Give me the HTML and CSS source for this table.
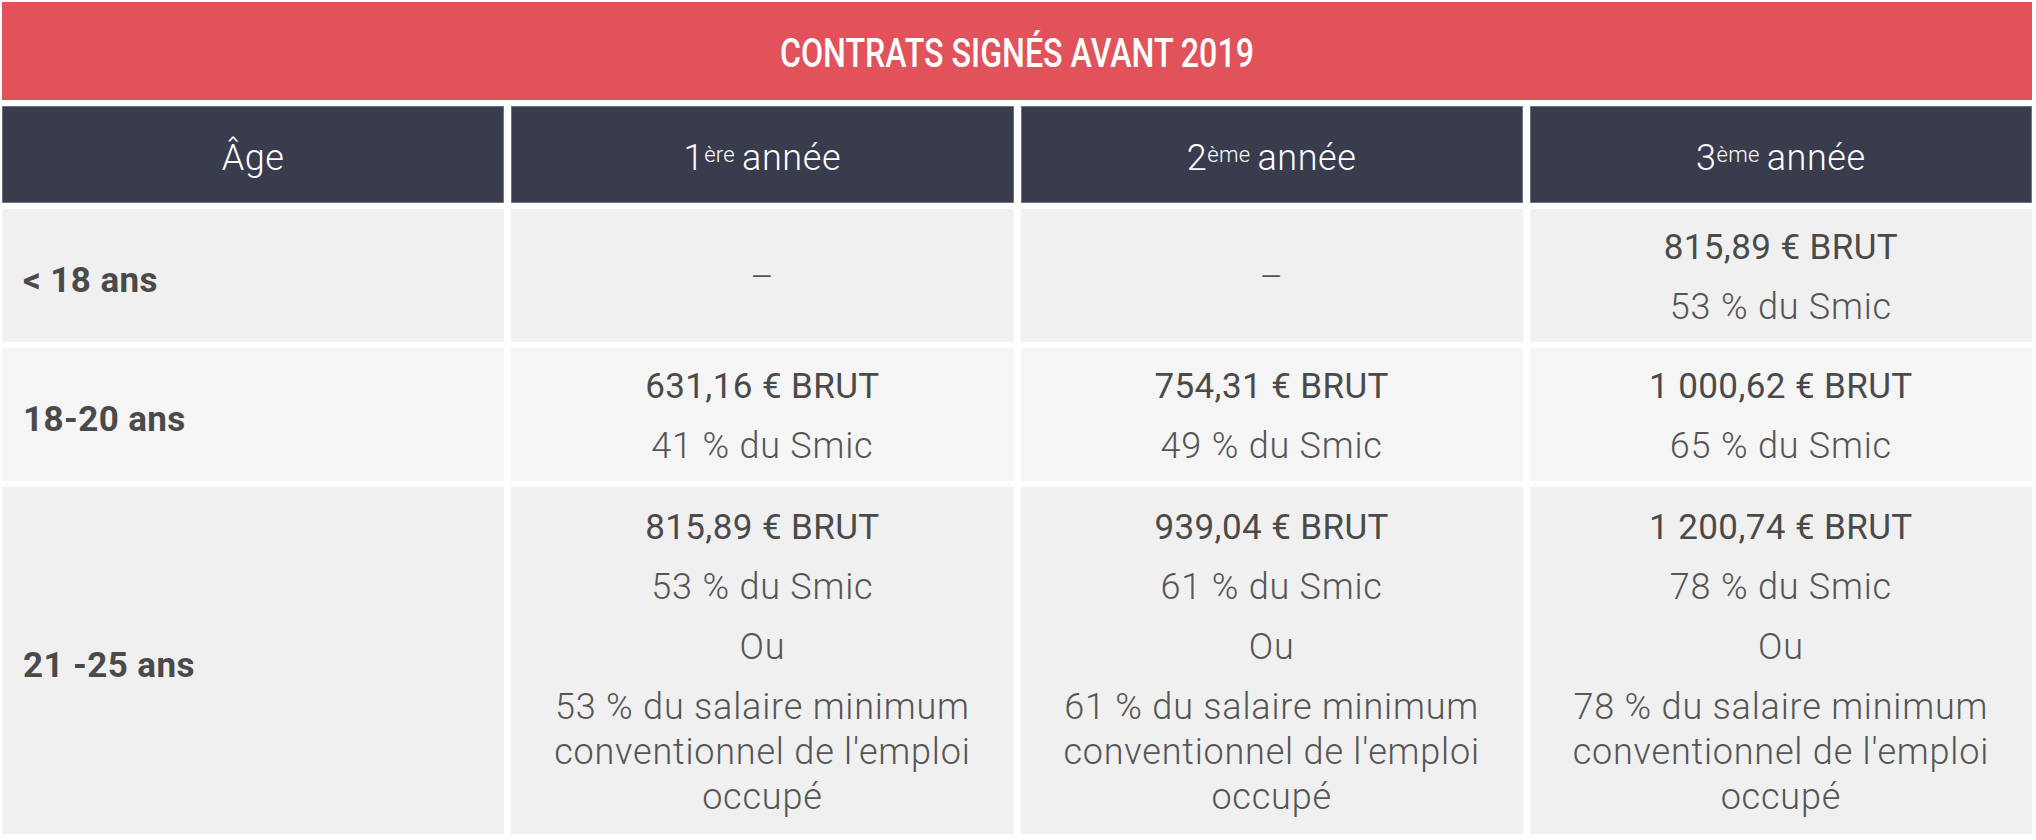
FILE: index.html
```html
<!DOCTYPE html>
<html lang="fr">
<head>
<meta charset="utf-8">
<title>Contrats signés avant 2019</title>
<link rel="stylesheet" href="styles.css">
</head>
<body>
<div class="table">
  <div class="title"><span class="title-text">CONTRATS SIGNÉS AVANT 2019</span></div>

  <div class="head">Âge</div>
  <div class="head">1<sup>ère</sup> année</div>
  <div class="head">2<sup>ème</sup> année</div>
  <div class="head">3<sup>ème</sup> année</div>

  <div class="cell label odd">&lt; 18 ans</div>
  <div class="cell odd"><p class="light">–</p></div>
  <div class="cell odd"><p class="light">–</p></div>
  <div class="cell odd"><p class="amount">815,89 € BRUT</p><p class="light">53 % du Smic</p></div>

  <div class="cell label even">18-20 ans</div>
  <div class="cell even"><p class="amount">631,16 € BRUT</p><p class="light">41 % du Smic</p></div>
  <div class="cell even"><p class="amount">754,31 € BRUT</p><p class="light">49 % du Smic</p></div>
  <div class="cell even"><p class="amount">1 000,62 € BRUT</p><p class="light">65 % du Smic</p></div>

  <div class="cell label odd">21 -25 ans</div>
  <div class="cell odd"><p class="amount">815,89 € BRUT</p><p class="light">53 % du Smic</p><p class="light">Ou</p><p class="light">53 % du salaire minimum<br>conventionnel de l'emploi<br>occupé</p></div>
  <div class="cell odd"><p class="amount">939,04 € BRUT</p><p class="light">61 % du Smic</p><p class="light">Ou</p><p class="light">61 % du salaire minimum<br>conventionnel de l'emploi<br>occupé</p></div>
  <div class="cell odd"><p class="amount">1 200,74 € BRUT</p><p class="light">78 % du Smic</p><p class="light">Ou</p><p class="light">78 % du salaire minimum<br>conventionnel de l'emploi<br>occupé</p></div>
</div>
</body>
</html>
```

FILE: styles.css
```css
* { box-sizing: border-box; }

html, body {
  margin: 0;
  padding: 0;
  background: #ffffff;
}

body {
  padding: 2px 4px 6px 2px;
  font-family: Roboto, "Noto Sans", "Liberation Sans", sans-serif;
  color: #4b4b4b;
}

.table {
  display: grid;
  grid-template-columns: repeat(4, 1fr);
  grid-template-rows: 98px 97px 133px 133px 347px;
  column-gap: 7px;
  row-gap: 6px;
}

.title {
  grid-column: 1 / -1;
  background: #e1525a;
  color: #ffffff;
  display: flex;
  align-items: center;
  justify-content: center;
  padding-top: 4px;
}

.title-text {
  display: inline-block;
  font-family: Roboto, "Noto Sans", sans-serif;
  font-weight: 500;
  font-size: 41px;
  transform: scaleX(0.785);
  white-space: nowrap;
}

.head {
  background: #393c4d;
  border: 1px solid #6f7282;
  color: #ffffff;
  display: flex;
  align-items: center;
  justify-content: center;
  padding-top: 6px;
  font-weight: 300;
  font-size: 36px;
  letter-spacing: 0.6px;
}

.head sup {
  font-size: 22px;
  line-height: 0;
  position: relative;
  top: -3px;
  margin-right: 7px;
  letter-spacing: 0.3px;
}

.cell {
  display: flex;
  flex-direction: column;
  justify-content: center;
  align-items: center;
  gap: 15px;
  padding-top: 4px;
  text-align: center;
  font-size: 35px;
}

.cell p {
  margin: 0;
  line-height: 45px;
}

.odd { background: #f0f0f0; }
.even { background: #f5f5f5; }

.label {
  align-items: flex-start;
  padding-top: 9px;
  padding-left: 21px;
  font-weight: 700;
  font-size: 35px;
  letter-spacing: 0.4px;
  color: #4a4a4a;
}

.amount {
  font-weight: 400;
  letter-spacing: 0.4px;
  color: #4a4a4a;
}

.light {
  font-weight: 300;
  font-size: 36px;
  letter-spacing: 0.8px;
  color: #555555;
}
```
